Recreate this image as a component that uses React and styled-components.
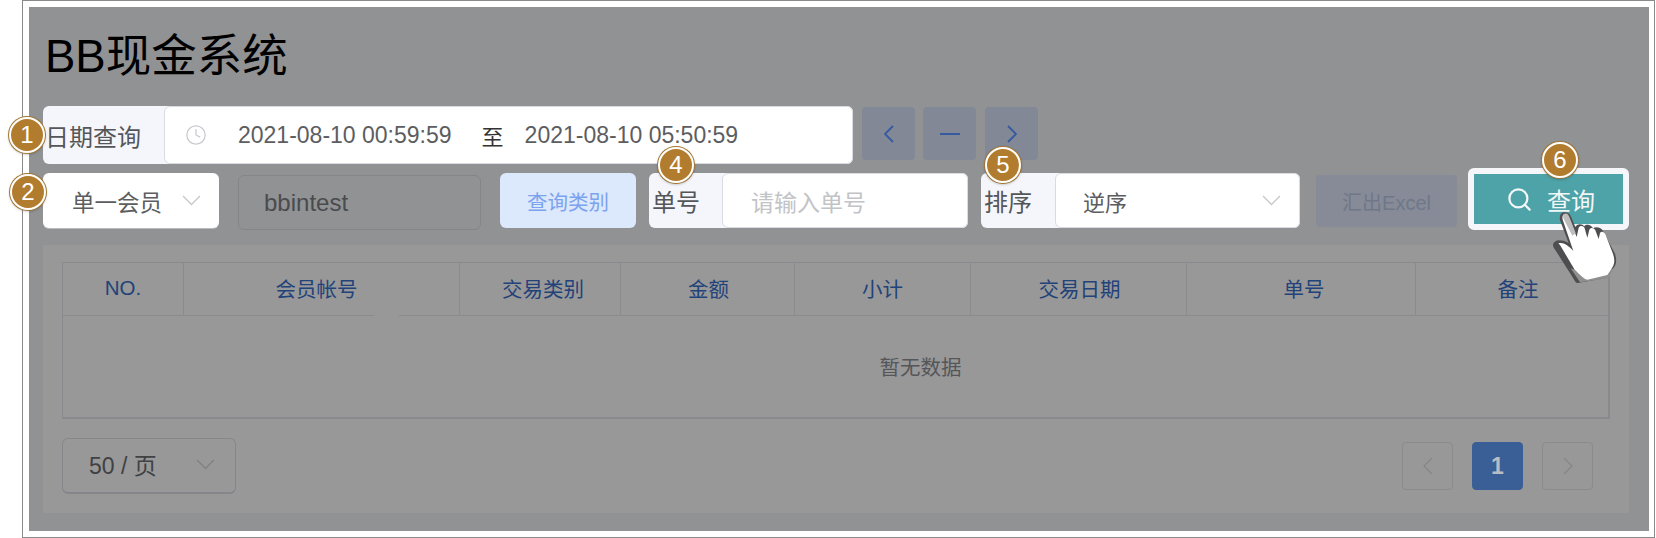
import React from "react";
import styled, { createGlobalStyle } from "styled-components";
import { LuSearch, LuClock } from "react-icons/lu";

const Global = createGlobalStyle`
  html, body { margin: 0; padding: 0; background: #fff; }
  body { font-family: "Liberation Sans", "Noto Sans CJK SC", sans-serif; }
`;

const Frame = styled.div`
  box-sizing: border-box;
  width: 1633px;
  height: 538px;
  margin-left: 22px;
  padding: 6px 5px 6px 6px;
  border: 1px solid #8a8a8a;
  background: #fff;
`;

const Shade = styled.div`
  box-sizing: border-box;
  height: 100%;
  background: #919294;
  padding: 0 20px 18px 14px;
  display: flex;
  flex-direction: column;
`;

const Title = styled.h1`
  margin: 0 0 0 2px;
  height: 99px;
  padding-top: 25px;
  box-sizing: border-box;
  font-size: 45.5px;
  line-height: 50px;
  font-weight: 400;
  color: #000;
`;

const DateRow = styled.div`
  display: flex;
  align-items: flex-start;
  height: 67px;
`;

const FilterRow = styled.div`
  display: flex;
  align-items: flex-start;
  height: 72px;
`;

const Group = styled.div`
  position: relative;
  box-sizing: border-box;
  display: flex;
  width: ${(p) => p.$width}px;
  height: ${(p) => p.$height || 55}px;
  margin-left: ${(p) => p.$gap || 0}px;
  background: #f4f6fb;
  border-radius: 6px;
`;

const Label = styled.div`
  width: ${(p) => p.$width}px;
  flex-shrink: 0;
  display: flex;
  align-items: center;
  padding-left: ${(p) => p.$pad || 0}px;
  box-sizing: border-box;
  font-size: 24px;
  color: #555659;
`;

const Field = styled.div`
  flex: 1;
  box-sizing: border-box;
  display: flex;
  align-items: center;
  padding: 0 18px 0 ${(p) => p.$pad || 0}px;
  background: #fff;
  border: 1px solid #d9dbe0;
  border-radius: 6px;
  font-size: ${(p) => p.$size || 22}px;
  color: ${(p) => p.$color || "#5c5d60"};
`;

const DateText = styled.span`
  font-size: 23px;
  margin-left: ${(p) => p.$gap || 0}px;
  color: #5c5d60;
`;

const Sep = styled.span`
  margin: 0 21px 0 30px;
  font-size: 22px;
  color: #333;
`;

const NavBtn = styled.div`
  width: 53px;
  height: 53px;
  margin-left: ${(p) => p.$gap}px;
  margin-top: 1px;
  border-radius: 4px;
  background: #838896;
  display: flex;
  align-items: center;
  justify-content: center;
`;

const SelectBox = styled.div`
  position: relative;
  box-sizing: border-box;
  width: 176px;
  height: 55px;
  display: flex;
  align-items: center;
  justify-content: space-between;
  padding: 0 18px 0 29px;
  background: #fff;
  border-radius: 6px;
  font-size: 22.5px;
  color: #5c5d60;
  box-shadow: 0 1px 0 #bbb;
`;

const TextInput = styled.div`
  box-sizing: border-box;
  width: 243px;
  height: 55px;
  margin: 2px 0 0 19px;
  padding-left: 25px;
  display: flex;
  align-items: center;
  border: 1px solid #85868a;
  border-radius: 6px;
  font-size: 24px;
  color: #4a4b4e;
`;

const TypeBtn = styled.div`
  width: 136px;
  height: 55px;
  margin-left: 19px;
  border-radius: 6px;
  background: #dce8fc;
  color: #7ba3ee;
  font-size: 20.5px;
  display: flex;
  align-items: center;
  justify-content: center;
`;

const ExcelBtn = styled.div`
  width: 141px;
  height: 52px;
  margin: 2px 0 0 16px;
  border-radius: 4px;
  background: #868b97;
  color: #70778a;
  font-size: 20px;
  display: flex;
  align-items: center;
  justify-content: center;
`;

const SearchBtn = styled.div`
  position: relative;
  box-sizing: border-box;
  width: 161px;
  height: 62px;
  margin: -5px 0 0 11px;
  padding-left: 4px;
  border: 6px solid #f4f6f9;
  border-radius: 6px;
  background: #4ea3a8;
  color: #f2f7f7;
  font-size: 24px;
  display: flex;
  align-items: center;
  justify-content: center;
  gap: 14px;
`;

const Panel = styled.div`
  flex: 1;
  background: #989898;
  padding: 17px 19px 0 19px;
  display: flex;
  flex-direction: column;
`;

const Table = styled.div`
  box-sizing: border-box;
  height: 157px;
  border: 1px solid #8a8a8e;
  border-bottom-width: 2px;
  border-right-width: 2px;
`;

const Head = styled.div`
  position: relative;
  display: grid;
  grid-template-columns: 120px 276px 161px 174px 176px 216px 229px 1fr;
  height: 52px;
  border-bottom: 1px solid #8b8b8e;
`;

const Cell = styled.div`
  display: flex;
  align-items: center;
  justify-content: center;
  padding: 0 ${(p) => (p.$shift < 0 ? -p.$shift * 2 : 0)}px 3px ${(p) => (p.$shift > 0 ? p.$shift * 2 : 0)}px;
  font-size: 20.5px;
  color: #22427a;
  border-left: ${(p) => (p.$first ? "none" : "1px solid #8b8b8e")};
`;

const Notch = styled.div`
  position: absolute;
  left: 311px;
  bottom: -1px;
  width: 25px;
  height: 1px;
  background: #989898;
`;

const Empty = styled.div`
  box-sizing: border-box;
  height: 103px;
  padding: 0 0 4px 170px;
  display: flex;
  align-items: center;
  justify-content: center;
  font-size: 20.5px;
  color: #555659;
`;

const Pager = styled.div`
  display: flex;
  align-items: center;
  justify-content: space-between;
  padding-top: 19px;
`;

const PageSize = styled.div`
  box-sizing: border-box;
  width: 174px;
  height: 56px;
  display: flex;
  align-items: center;
  justify-content: space-between;
  padding: 0 20px 3px 26px;
  border: 1px solid #85868a;
  border-bottom-width: 2px;
  border-radius: 6px;
  font-size: 23px;
  color: #404144;
`;

const Pages = styled.div`
  display: flex;
  gap: 19px;
  padding-right: 17px;
`;

const PageBtn = styled.div`
  box-sizing: border-box;
  width: 51px;
  height: 48px;
  display: flex;
  align-items: center;
  justify-content: center;
  border-radius: 4px;
  border: 1px solid ${(p) => (p.$active ? "#3a5e96" : "#8b8b8e")};
  background: ${(p) => (p.$active ? "#3a5e96" : "transparent")};
  color: ${(p) => (p.$active ? "#b9bcc2" : "#85868a")};
  font-size: 23px;
  font-weight: 700;
`;

const Badge = styled.div`
  position: absolute;
  left: ${(p) => p.$x}px;
  top: ${(p) => p.$y}px;
  box-sizing: border-box;
  width: 36px;
  height: 36px;
  border-radius: 50%;
  background: #b27c2e;
  border: 2px solid #fff;
  box-shadow: 0 0 0 1px #a3762f, 0 1px 3px rgba(0, 0, 0, 0.35);
  color: #fff;
  font-size: 24px;
  display: flex;
  align-items: center;
  justify-content: center;
`;

const Hand = styled.svg`
  position: absolute;
  left: 66px;
  top: 31px;
`;

const Chevron = ({ dir = "down", w = 18, color, stroke = 1.2 }) => {
  const pts = {
    down: "1,1 9,9 17,1",
    left: "9,1 1,9 9,17",
    right: "1,1 9,9 1,17",
  }[dir];
  const vb = dir === "down" ? "0 0 18 10" : "0 0 10 18";
  const h = dir === "down" ? (w * 10) / 18 : (w * 18) / 10;
  return (
    <svg width={w} height={h} viewBox={vb}>
      <polyline points={pts} fill="none" stroke={color} strokeWidth={stroke} />
    </svg>
  );
};

const heads = [
  ["NO.", 0],
  ["会员帐号", -5],
  ["交易类别", 3],
  ["金额", 1],
  ["小计", 0],
  ["交易日期", 1],
  ["单号", 3],
  ["备注", 6],
];

export default function App() {
  return (
    <>
      <Global />
      <Frame>
        <Shade>
          <Title>BB现金系统</Title>
          <DateRow>
            <Group $width={810} $height={58}>
              <Label $width={121} $pad={2}>日期查询</Label>
              <Field $pad={20}>
                <LuClock size={22} color="#c9cbd1" strokeWidth={1.4} />
                <DateText $gap={31}>2021-08-10 00:59:59</DateText>
                <Sep>至</Sep>
                <DateText>2021-08-10 05:50:59</DateText>
              </Field>
              <Badge $x={-34} $y={11}>1</Badge>
            </Group>
            <NavBtn $gap={9}><Chevron dir="left" w={10} color="#355a9f" stroke={1.8} /></NavBtn>
            <NavBtn $gap={8}>
              <svg width="20" height="4"><rect width="20" height="2" y="1" fill="#355a9f" /></svg>
            </NavBtn>
            <NavBtn $gap={9}><Chevron dir="right" w={10} color="#355a9f" stroke={1.8} /></NavBtn>
          </DateRow>
          <FilterRow>
            <SelectBox>
              单一会员
              <Chevron w={19} color="#c6c7cb" />
              <Badge $x={-33} $y={1}>2</Badge>
            </SelectBox>
            <TextInput>bbintest</TextInput>
            <TypeBtn>查询类别</TypeBtn>
            <Group $width={319} $gap={13}>
              <Label $width={73} $pad={3}>单号</Label>
              <Field $pad={28} $size={23} $color="#c2c3c6">请输入单号</Field>
              <Badge $x={9} $y={-26}>4</Badge>
            </Group>
            <Group $width={319} $gap={13}>
              <Label $width={74} $pad={3}>排序</Label>
              <Field $pad={27}>
                逆序
                <span style={{ marginLeft: "auto", lineHeight: 0 }}>
                  <Chevron w={19} color="#c6c7cb" />
                </span>
              </Field>
              <Badge $x={4} $y={-26}>5</Badge>
            </Group>
            <ExcelBtn>汇出Excel</ExcelBtn>
            <SearchBtn>
              <LuSearch size={27} strokeWidth={2} />
              查询
              <Badge $x={68} $y={-32}>6</Badge>
              <Hand width="90" height="85" viewBox="0 0 270 255">
                <path d="M70 22c10-2 18 2 22 10l14 34c4-10 20-12 27-2 7-8 20-5 26 6 8-6 24-4 30 8l36 68c6 20 4 32-4 42l-28 32-80 14c-6 0-12-12-18-22L44 132c-10-12-4-24 12-26 10 0 20 2 30 8L60 46c-2-10 0-20 10-24z" fill="#4e4e50" />
                <path d="M92 190l28 42 85-12 16-30-50 20-34-2z" fill="#8f8f90" />
                <path d="M72 28c6-2 10 0 14 8l24 60c0 0 0 0 0 0l6-28c4-8 16-6 18 2l8 28 6-24c4-8 14-6 18 2l10 26 4-18c4-6 12-4 16 4l22 56c8 22 6 34-4 48l-12 18-60 14c-12-2-24-18-38-30L60 120c-6-4-6-6 2-6 12 0 26 10 38 24L68 44c-2-8 0-14 4-16z" fill="#fff" />
                <path d="M74 26c8-2 12 4 15 12l18 46-10 8-26-50c-3-8-2-14 3-16z" fill="#bdbdbd" />
              </Hand>
            </SearchBtn>
          </FilterRow>
          <Panel>
            <Table>
              <Head>
                {heads.map(([h, shift], i) => (
                  <Cell key={h} $first={i === 0} $shift={shift}>{h}</Cell>
                ))}
                <Notch />
              </Head>
              <Empty>暂无数据</Empty>
            </Table>
            <Pager>
              <PageSize>
                50 / 页
                <Chevron w={19} color="#7e7f82" />
              </PageSize>
              <Pages>
                <PageBtn><Chevron dir="left" w={10} color="#85868a" /></PageBtn>
                <PageBtn $active>1</PageBtn>
                <PageBtn><Chevron dir="right" w={10} color="#85868a" /></PageBtn>
              </Pages>
            </Pager>
          </Panel>
        </Shade>
      </Frame>
    </>
  );
}
